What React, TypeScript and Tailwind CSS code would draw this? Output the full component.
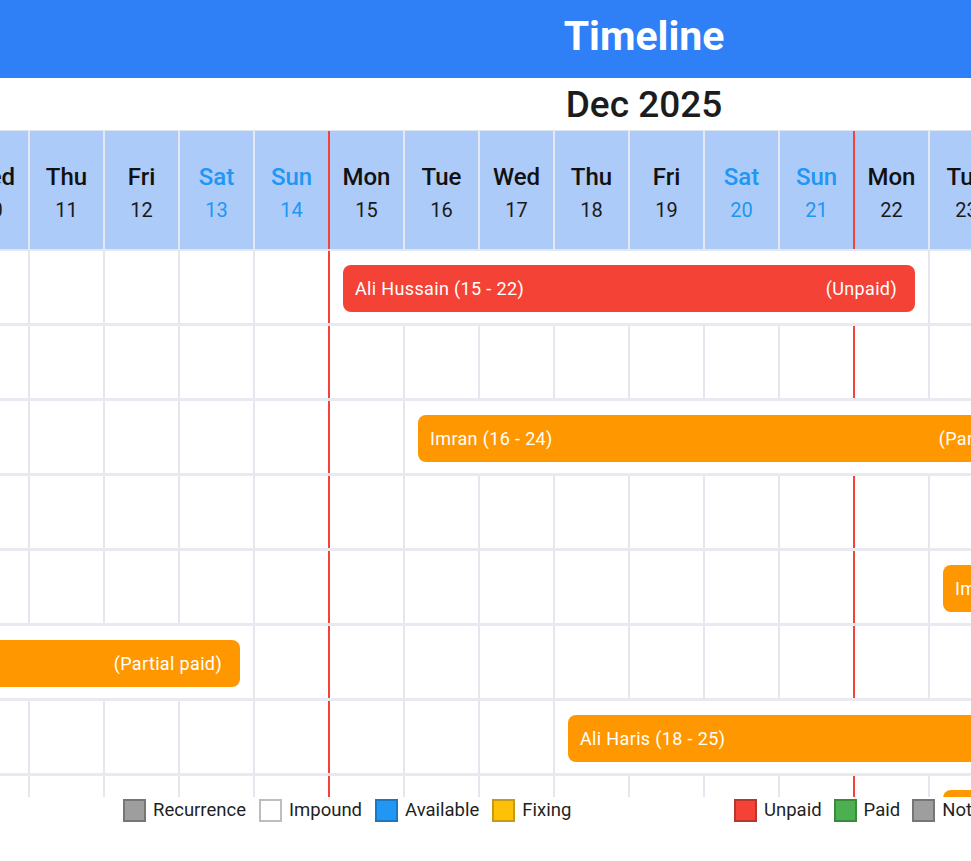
import React from "react";

type Booking = {
  start: number;
  end: number;
  name: string;
  status: string;
  tone: "red" | "orange";
};

const WEEKDAYS = ["Mon", "Tue", "Wed", "Thu", "Fri", "Sat", "Sun"];
const DAYS = Array.from({ length: 31 }, (_, i) => i + 1);

// Dec 1 2025 is a Monday
const weekday = (d: number) => WEEKDAYS[(d - 1) % 7];
const isWeekend = (d: number) => (d - 1) % 7 >= 5;
const isSunday = (d: number) => (d - 1) % 7 === 6;

const ROWS: (Booking | null)[] = [
  { start: 15, end: 22, name: "Ali Hussain", status: "Unpaid", tone: "red" },
  null,
  { start: 16, end: 24, name: "Imran", status: "Partial paid", tone: "orange" },
  null,
  { start: 23, end: 29, name: "Imran", status: "Partial paid", tone: "orange" },
  { start: 5, end: 13, name: "Usman", status: "Partial paid", tone: "orange" },
  { start: 18, end: 25, name: "Ali Haris", status: "Partial paid", tone: "orange" },
  { start: 23, end: 30, name: "Bilal", status: "Partial paid", tone: "orange" },
];

const toneClass = {
  red: "bg-[#f44336]",
  orange: "bg-[#ff9800]",
};

const LEGEND_LEFT = [
  { label: "Recurrence", box: "bg-[#9e9e9e] border-[#767676]" },
  { label: "Impound", box: "bg-white border-[#bdbdbd]" },
  { label: "Available", box: "bg-[#2196f3] border-[#1a78c2]" },
  { label: "Fixing", box: "bg-[#ffc107] border-[#c49a17]" },
];

const LEGEND_RIGHT = [
  { label: "Unpaid", box: "bg-[#f44336] border-[#b7372d]" },
  { label: "Paid", box: "bg-[#4caf50] border-[#3a8a3e]" },
  { label: "Not paid", box: "bg-[#9e9e9e] border-[#767676]" },
];

function LegendItem({ label, box }: { label: string; box: string }) {
  return (
    <div className="flex shrink-0 items-center gap-[7px]">
      <span className={`h-[23px] w-[23px] shrink-0 border-2 ${box}`} />
      <span className="whitespace-nowrap text-[18.5px] leading-[23px] text-[#1f1f1f]">{label}</span>
    </div>
  );
}

function DayHeader({ d }: { d: number }) {
  const weekend = isWeekend(d);
  return (
    <div
      className={`flex h-full flex-col items-center justify-center border-r-2 bg-[#adcbf9] pt-[6px] ${
        isSunday(d) ? "border-[#f44336]" : "border-[#e4e8f2]"
      }`}
    >
      <span className={`text-[24px] font-medium leading-[28px] ${weekend ? "text-[#2196f3]" : "text-[#111]"}`}>
        {weekday(d)}
      </span>
      <span className={`mt-[5px] text-[20px] leading-[28px] ${weekend ? "text-[#2196f3]" : "text-[#1a1a1a]"}`}>
        {d}
      </span>
    </div>
  );
}

function Row({ booking }: { booking: Booking | null }) {
  const cells: React.ReactNode[] = [];
  for (const d of DAYS) {
    if (booking && d > booking.start && d <= booking.end) continue;
    if (booking && d === booking.start) {
      cells.push(
        <div
          key={d}
          className="flex h-full items-start border-r-2 border-[#e6e6ee] bg-white pl-[13px] pr-[13px] pt-[14px]"
          style={{ gridColumn: `span ${booking.end - booking.start + 1}` }}
        >
          <div
            className={`flex h-[47px] w-full items-center justify-between rounded-[8px] pl-[12px] pr-[18px] text-[18px] tracking-[0.35px] text-white ${
              toneClass[booking.tone]
            }`}
          >
            <span className="whitespace-nowrap">
              {booking.name} ({booking.start} - {booking.end})
            </span>
            <span className="whitespace-nowrap">({booking.status})</span>
          </div>
        </div>
      );
      continue;
    }
    cells.push(
      <div
        key={d}
        className={`h-full border-r-2 ${isSunday(d) ? "border-[#f44336]" : "border-[#e6e6ee]"}`}
      />
    );
  }
  return (
    <div className="grid h-[75px] grid-cols-[repeat(31,75px)] border-b-[3px] border-[#e9e9f1]">{cells}</div>
  );
}

export default function App() {
  return (
    <div className="h-[861px] w-[971px] overflow-hidden bg-white font-[Roboto,sans-serif]">
      <div className="w-[1288px]">
        <header className="flex h-[78px] items-center justify-center bg-[#2f80f6] pb-[5px]">
          <h1 className="text-[41px] font-bold leading-none text-white">Timeline</h1>
        </header>
        <div className="flex h-[52px] items-center justify-center">
          <h2 className="text-[37px] font-medium leading-none text-[#1c1c1c]">Dec 2025</h2>
        </div>
      </div>

      <div className="h-[667px] overflow-hidden border-t border-[#dfe3ec]">
        <div className="ml-[-720px] w-[2325px]">
          <div className="grid h-[120px] grid-cols-[repeat(31,75px)] border-b-2 border-[#e6e6ee]">
            {DAYS.map((d) => (
              <DayHeader key={d} d={d} />
            ))}
          </div>
          {ROWS.map((b, i) => (
            <Row key={i} booking={b} />
          ))}
        </div>
      </div>

      <div className="grid w-[1288px] grid-cols-[611px_auto] pl-[123px] pt-[2px]">
        <div className="flex items-center gap-[13px]">
          {LEGEND_LEFT.map((l) => (
            <LegendItem key={l.label} {...l} />
          ))}
        </div>
        <div className="flex items-center gap-[12px]">
          {LEGEND_RIGHT.map((l) => (
            <LegendItem key={l.label} {...l} />
          ))}
        </div>
      </div>
    </div>
  );
}
